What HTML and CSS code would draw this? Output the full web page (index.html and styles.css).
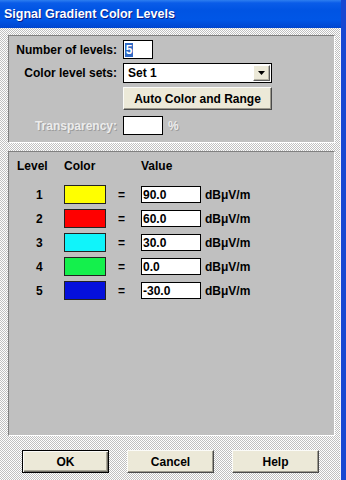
FILE: index.html
```html
<!DOCTYPE html>
<html>
<head>
<meta charset="utf-8">
<link rel="stylesheet" href="styles.css">
</head>
<body>
<div class="window">
  <div class="titlebar"><span class="title">Signal Gradient Color Levels</span></div>
  <div class="client">
    <div class="panel top-panel">
      <div class="form-grid">
        <span class="lbl">Number of levels:</span>
        <div class="ctl"><span class="edit num-edit"><span class="selected">5</span></span></div>

        <span class="lbl">Color level sets:</span>
        <div class="ctl">
          <div class="combo">
            <span class="combo-text">Set 1</span>
            <span class="combo-btn"><svg width="7" height="4" viewBox="0 0 7 4"><path d="M0 0H7L3.5 4Z" fill="#000"/></svg></span>
          </div>
        </div>

        <span class="lbl"></span>
        <div class="ctl"><button class="btn auto-btn">Auto Color and Range</button></div>

        <span class="lbl disabled trans-row">Transparency:</span>
        <div class="ctl trans-row"><span class="edit trans-edit"></span><span class="pct disabled">%</span></div>
      </div>
    </div>

    <div class="panel levels-panel">
      <div class="levels-grid">
        <span class="hdr">Level</span>
        <span class="hdr">Color</span>
        <span class="hdr"></span>
        <span class="hdr">Value</span>
        <span class="hdr"></span>

        <span class="lvl">1</span>
        <span class="swatch sw-yellow"></span>
        <span class="eq">=</span>
        <span class="edit val">90.0</span>
        <span class="unit">dBμV/m</span>

        <span class="lvl">2</span>
        <span class="swatch sw-red"></span>
        <span class="eq">=</span>
        <span class="edit val">60.0</span>
        <span class="unit">dBμV/m</span>

        <span class="lvl">3</span>
        <span class="swatch sw-cyan"></span>
        <span class="eq">=</span>
        <span class="edit val">30.0</span>
        <span class="unit">dBμV/m</span>

        <span class="lvl">4</span>
        <span class="swatch sw-green"></span>
        <span class="eq">=</span>
        <span class="edit val">0.0</span>
        <span class="unit">dBμV/m</span>

        <span class="lvl">5</span>
        <span class="swatch sw-blue"></span>
        <span class="eq">=</span>
        <span class="edit val">-30.0</span>
        <span class="unit">dBμV/m</span>
      </div>
    </div>

    <div class="buttons">
      <button class="btn dlg-btn default">OK</button>
      <button class="btn dlg-btn">Cancel</button>
      <button class="btn dlg-btn">Help</button>
    </div>
  </div>
</div>
</body>
</html>
```

FILE: styles.css
```css
html, body {
  margin: 0;
  padding: 0;
  background: #c0c0c0;
}

body {
  font-family: "Liberation Sans", Arial, sans-serif;
  font-size: 12px;
  font-weight: bold;
  color: #000;
}

.window {
  width: 346px;
  height: 480px;
  box-sizing: border-box;
  border-right: 5px solid #1848d2;
  display: flex;
  flex-direction: column;
  overflow: hidden;
}

.titlebar {
  height: 28px;
  flex: none;
  background: linear-gradient(#2d7ef0 0, #0a5ce8 3px, #0054e3 10px, #0056e6 70%, #0046cf 100%);
  display: flex;
  align-items: center;
  padding-left: 4px;
  padding-bottom: 1px;
  box-sizing: border-box;
}

.title {
  color: #fff;
  font-size: 12.5px;
  font-weight: bold;
  text-shadow: 1px 1px 0 #0a1f8a;
}

.client {
  flex: 1;
  background-color: #c0c0c0;
  background-image: conic-gradient(#fff 0 25%, transparent 0 50%, #fff 0 75%, transparent 0);
  background-size: 2px 2px;
  box-shadow: inset -1px 0 0 #eef0f8;
  padding: 7px 6px 0 8px;
  display: flex;
  flex-direction: column;
}

.panel {
  background: #c0c0c0;
  border: 1px solid;
  border-color: #808080 #fff #fff #808080;
  box-sizing: border-box;
}

.top-panel {
  height: 108px;
  padding-top: 4px;
}

.form-grid {
  display: grid;
  grid-template-columns: 108px 149px;
  column-gap: 6px;
  row-gap: 4px;
  align-items: center;
}

.lbl {
  text-align: right;
  white-space: nowrap;
}

.ctl {
  display: flex;
  align-items: center;
}

.trans-row {
  margin-top: 2px;
}

.disabled {
  color: #ececec;
  text-shadow: 1px 1px 0 #9c9c9c;
}

.edit {
  display: flex;
  align-items: center;
  background: #fff;
  border: 1px solid #000;
  box-sizing: border-box;
  white-space: nowrap;
}

.num-edit {
  width: 30px;
  height: 19px;
  padding-left: 1px;
}

.selected {
  background: #316ac5;
  color: #fff;
  width: 8px;
  height: 14px;
  line-height: 14px;
  text-align: center;
}

.combo {
  width: 149px;
  height: 20px;
  box-sizing: border-box;
  background: #fff;
  border: 1px solid #000;
  display: flex;
  align-items: center;
  justify-content: space-between;
  padding: 0 1px 0 4px;
}

.combo-btn {
  width: 17px;
  height: 16px;
  box-sizing: border-box;
  background: #ece9d8;
  border: 1px solid;
  border-color: #fff #5e5e5e #5e5e5e #fff;
  box-shadow: inset -1px -1px 0 #b5b2a4;
  display: flex;
  align-items: center;
  justify-content: center;
}

.btn {
  font-family: "Liberation Sans", Arial, sans-serif;
  font-size: 12px;
  font-weight: bold;
  color: #000;
  background: #ece9d8;
  border: 1px solid;
  border-color: #fbfbf8 #4a4a4a #4a4a4a #fbfbf8;
  box-shadow: inset -1px -1px 0 #9d9a8e;
  box-sizing: border-box;
  padding: 0;
  margin: 0;
}

.auto-btn {
  width: 149px;
  height: 23px;
}

.trans-edit {
  width: 40px;
  height: 19px;
}

.pct {
  margin-left: 5px;
}

.levels-panel {
  height: 285px;
  margin-top: 8px;
  padding: 7px 0 0 8px;
}

.levels-grid {
  display: grid;
  grid-template-columns: 47px 42px 35px 60px auto;
  grid-template-rows: 21px repeat(5, 19px);
  row-gap: 5px;
  align-items: center;
}

.hdr {
  align-self: start;
  line-height: 14px;
}

.lvl {
  padding-left: 19px;
}

.swatch {
  height: 19px;
  box-sizing: border-box;
  border: 1px solid #222;
}

.sw-yellow { background: #ffff00; }
.sw-red { background: #ff0000; }
.sw-cyan { background: #10f4fa; }
.sw-green { background: #14f04c; }
.sw-blue { background: #0410dc; }

.eq {
  padding-left: 12px;
}

.val {
  height: 17px;
  padding-left: 1px;
}

.unit {
  padding-left: 4px;
  white-space: nowrap;
}

.buttons {
  display: flex;
  gap: 18px;
  margin-top: 14px;
  padding-left: 14px;
}

.dlg-btn {
  width: 87px;
  height: 23px;
}

.dlg-btn.default {
  border-color: #000;
  box-shadow: inset 1px 1px 0 #fbfbf8, inset -1px -1px 0 #6e6c64, inset -2px -2px 0 #aaa798;
}
```
